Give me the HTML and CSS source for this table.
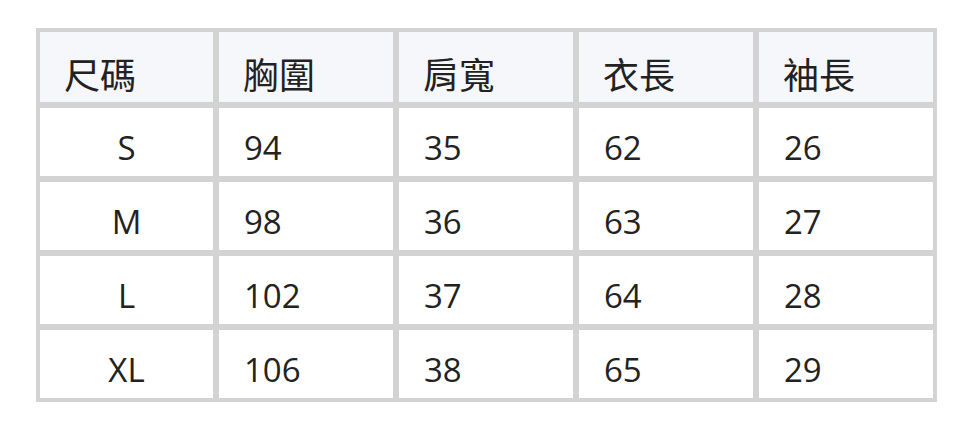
FILE: index.html
```html
<!DOCTYPE html>
<html lang="zh-Hant">
<head>
<meta charset="utf-8">
<title>尺碼表</title>
<link rel="stylesheet" href="styles.css">
</head>
<body>
<div class="page">
  <table class="size-table">
    <colgroup>
      <col class="col-first">
      <col class="col">
      <col class="col">
      <col class="col">
      <col class="col">
    </colgroup>
    <thead>
      <tr>
        <th>尺碼</th>
        <th>胸圍</th>
        <th>肩寬</th>
        <th>衣長</th>
        <th>袖長</th>
      </tr>
    </thead>
    <tbody>
      <tr><td class="size">S</td><td>94</td><td>35</td><td>62</td><td>26</td></tr>
      <tr><td class="size">M</td><td>98</td><td>36</td><td>63</td><td>27</td></tr>
      <tr><td class="size">L</td><td>102</td><td>37</td><td>64</td><td>28</td></tr>
      <tr><td class="size">XL</td><td>106</td><td>38</td><td>65</td><td>29</td></tr>
    </tbody>
  </table>
</div>
</body>
</html>
```

FILE: styles.css
```css
html, body {
  margin: 0;
  padding: 0;
  background: #ffffff;
}

.page {
  padding: 28px 36px;
}

.size-table {
  table-layout: fixed;
  width: 901px;
  border-collapse: separate;
  border-spacing: 0;
  border: 1px solid #d3d3d3;
  color: #222222;
  font-family: "Open Sans", "Noto Sans CJK TC", sans-serif;
}

.col-first {
  width: 179px;
}

.col {
  width: 180px;
}

.size-table th,
.size-table td {
  border: 3px solid #d3d3d3;
  padding: 0 0 0 25px;
  text-align: left;
  white-space: nowrap;
}

.size-table th {
  background: #f6f7fb;
  font-family: "Noto Sans CJK TC", "Open Sans", sans-serif;
  font-weight: 400;
  font-size: 36px;
  line-height: 40px;
  height: 40px;
  padding-top: 21px;
  padding-bottom: 9px;
  padding-left: 24px;
}

.size-table td {
  font-size: 33px;
  line-height: 40px;
  height: 40px;
  padding-top: 20px;
  padding-bottom: 8px;
}

.size-table td.size {
  text-align: center;
  padding-left: 0;
}
```
